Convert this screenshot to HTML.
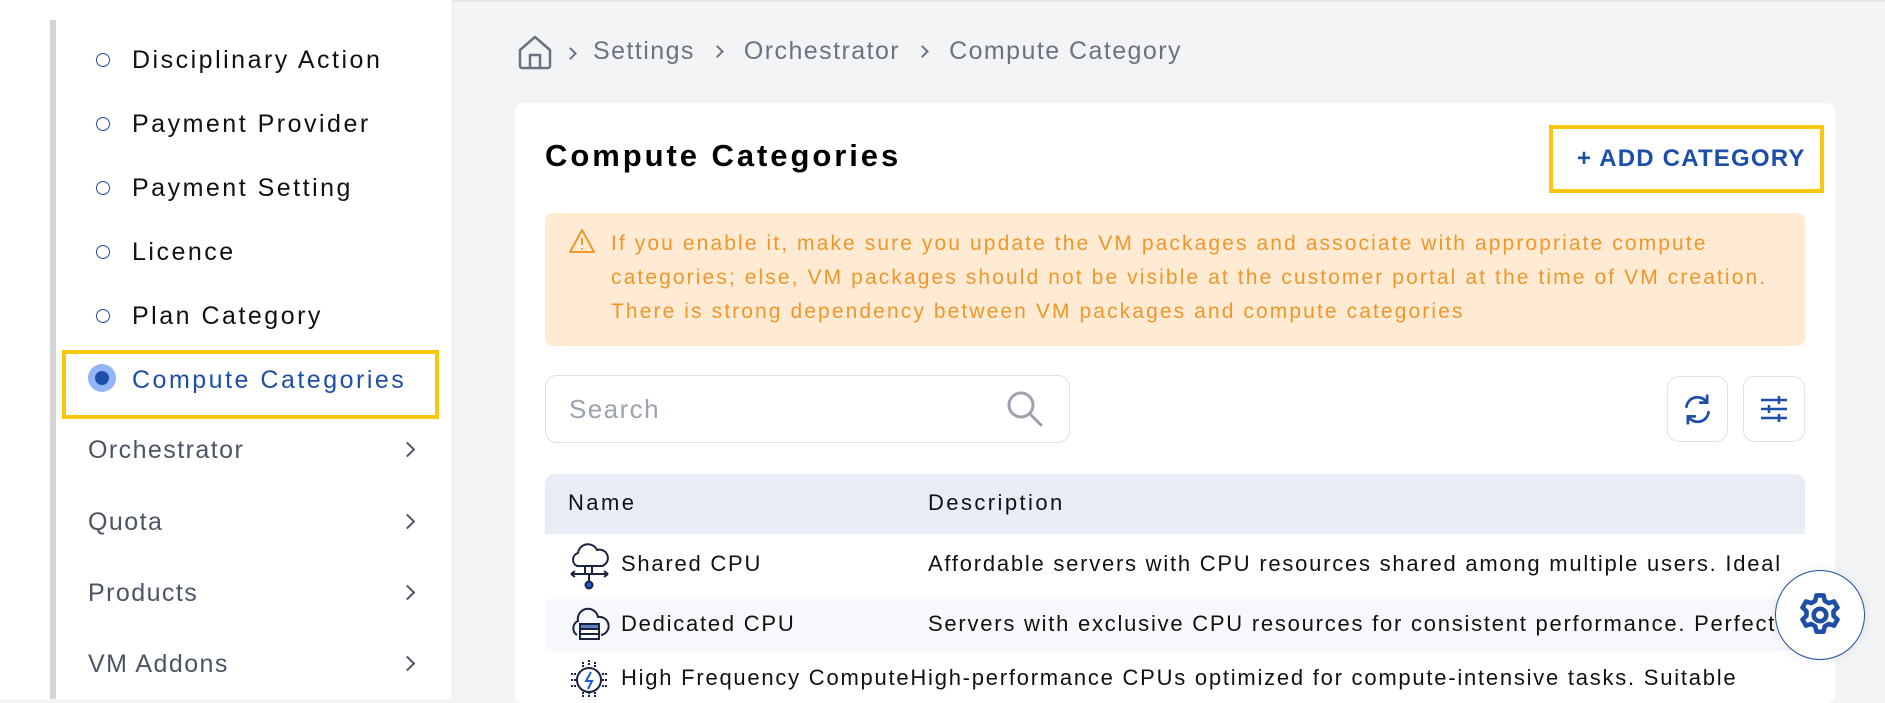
<!DOCTYPE html>
<html><head><meta charset="utf-8"><style>
*{margin:0;padding:0;box-sizing:border-box}
body{width:1885px;height:699px;overflow:hidden;background:#f3f4f6;font-family:"Liberation Sans",sans-serif;position:relative;letter-spacing:0.09em}
.a{position:absolute;white-space:nowrap}
#side{position:absolute;left:0;top:0;width:453px;height:699px;background:#fff;border-right:1px solid #e5e7eb}
.bar{position:absolute;left:50px;top:20px;width:6px;height:679px;background:#d4d4d4}
.si{position:absolute;left:132px;font-size:25px;color:#111;line-height:30px;letter-spacing:0.1em}
.dot{position:absolute;left:96px;width:14px;height:14px;border:1.5px solid #1e4fa8;border-radius:50%}
.mi{position:absolute;left:88px;font-size:25px;color:#4b5563;line-height:30px}
.chev{position:absolute;left:402px;width:11px;height:11px;border-right:2.5px solid #4b5563;border-top:2.5px solid #4b5563;transform:rotate(45deg)}
.row{position:absolute;left:545px;width:1259px;font-size:22px;color:#111}
.bcw{position:absolute;left:593px;top:37px;font-size:25px;color:#6b7280;white-space:nowrap;display:flex;align-items:center}
.sep{display:inline-block;width:9px;height:9px;border-right:2px solid #6b7280;border-top:2px solid #6b7280;transform:rotate(45deg);margin:0 22px 0 18px}
.rt{letter-spacing:0.11em}
</style></head><body>
<div id="side">
<div class="bar"></div>
<div class="dot" style="top:53px"></div><div class="si" style="top:45px">Disciplinary Action</div>
<div class="dot" style="top:117px"></div><div class="si" style="top:109px">Payment Provider</div>
<div class="dot" style="top:181px"></div><div class="si" style="top:173px">Payment Setting</div>
<div class="dot" style="top:245px"></div><div class="si" style="top:237px">Licence</div>
<div class="dot" style="top:309px"></div><div class="si" style="top:301px">Plan Category</div>
<div style="position:absolute;left:62px;top:350px;width:377px;height:69px;border:4px solid #f9c80e"></div>
<div style="position:absolute;left:88px;top:364px;width:28px;height:28px;border-radius:50%;background:#93b4f5"></div>
<div style="position:absolute;left:95px;top:371px;width:14px;height:14px;border-radius:50%;background:#1e4fa8"></div>
<div class="si" style="top:365px;color:#1e4fa8">Compute Categories</div>
<div class="mi" style="top:435px">Orchestrator</div><div class="chev" style="top:444px"></div>
<div class="mi" style="top:507px">Quota</div><div class="chev" style="top:516px"></div>
<div class="mi" style="top:578px">Products</div><div class="chev" style="top:587px"></div>
<div class="mi" style="top:649px">VM Addons</div><div class="chev" style="top:658px"></div>
</div>
<div style="position:absolute;left:453px;top:0;width:1432px;height:2px;background:#e5e7eb"></div>
<svg class="a" style="left:517px;top:34px" width="36" height="36" viewBox="0 0 36 36" fill="none" stroke="#6b7280" stroke-width="2.5" stroke-linejoin="round"><path d="M3 16L18 3l15 13v16a2 2 0 0 1-2 2H5a2 2 0 0 1-2-2z"/><path d="M13 34V21h10v13"/></svg>
<div class="a" style="left:566px;top:49px;width:9px;height:9px;border-right:2px solid #6b7280;border-top:2px solid #6b7280;transform:rotate(45deg)"></div>
<div class="bcw"><span>Settings</span><span class="sep"></span><span>Orchestrator</span><span class="sep"></span><span>Compute Category</span></div>
<div style="position:absolute;left:515px;top:103px;width:1320px;height:600px;background:#fff;border-radius:8px"></div>
<div class="a" style="left:545px;top:138px;font-size:31px;font-weight:bold;color:#000;letter-spacing:0.095em">Compute Categories</div>
<div style="position:absolute;left:1549px;top:125px;width:275px;height:68px;border:4px solid #f9c80e"></div>
<div class="a" style="left:1577px;top:145px;font-size:24px;font-weight:bold;color:#1e4fa8;letter-spacing:0.05em">+ ADD CATEGORY</div>
<div style="position:absolute;left:545px;top:213px;width:1260px;height:133px;background:#ffebd3;border-radius:8px"></div>
<svg class="a" style="left:568px;top:228px" width="28" height="26" viewBox="0 0 28 26" fill="none" stroke="#f0962a" stroke-width="2"><path d="M14 2L26 24H2z" stroke-linejoin="round"/><path d="M14 10v7M14 20v1.5"/></svg>
<div class="a" style="left:611px;top:227px;font-size:21px;line-height:34px;color:#f0962a;letter-spacing:0.1em">If you enable it, make sure you update the VM packages and associate with appropriate compute<br>categories; else, VM packages should not be visible at the customer portal at the time of VM creation.<br>There is strong dependency between VM packages and compute categories</div>
<div style="position:absolute;left:545px;top:375px;width:525px;height:68px;border:1.5px solid #e0e0e0;border-radius:12px"></div>
<div class="a" style="left:569px;top:394px;font-size:26px;color:#9ca3af">Search</div>
<svg class="a" style="left:1005px;top:389px" width="40" height="40" viewBox="0 0 40 40" fill="none" stroke="#9ca3af" stroke-width="3"><circle cx="16" cy="16" r="12"/><path d="M25 25l11 11" stroke-linecap="round"/></svg>
<div style="position:absolute;left:1667px;top:376px;width:61px;height:66px;border:1.5px solid #e0e0e0;border-radius:12px"></div>
<svg class="a" style="left:1681px;top:393px" width="33" height="33" viewBox="0 0 24 24" fill="none" stroke="#1e4fa8" stroke-width="2" stroke-linecap="round"><path d="M4 10a8 8 0 0 1 14.5-3.5M20 14a8 8 0 0 1-14.5 3.5"/><path d="M19 2v5h-5M5 22v-5h5"/></svg>
<div style="position:absolute;left:1743px;top:376px;width:62px;height:66px;border:1.5px solid #e0e0e0;border-radius:12px"></div>
<svg class="a" style="left:1760px;top:395px" width="28" height="28" viewBox="0 0 28 28" fill="none" stroke="#1e4fa8" stroke-width="2.5"><path d="M1 5h26M1 14h26M1 23h26"/><path d="M19 1v8M9 10v8M19 19v8"/></svg>
<div style="position:absolute;left:545px;top:474px;width:1260px;height:60px;background:#e8ecf5;border-radius:10px 10px 0 0"></div>
<div class="a rt" style="left:568px;top:490px;font-size:22px;color:#111">Name</div>
<div class="a rt" style="left:928px;top:490px;font-size:22px;color:#111">Description</div>
<div class="row" style="top:534px;height:65px;background:#fff"></div>
<div class="row" style="top:599px;height:52px;background:#f7f8fb"></div>
<div class="row" style="top:651px;height:48px;background:#fff"></div>
<svg class="a" style="left:567px;top:541px" width="45" height="50" viewBox="0 0 45 50" fill="none" stroke="#1a2340" stroke-width="2"><path d="M10 25a7 7 0 0 1 1-13 10 10 0 0 1 19-3 8 8 0 0 1 5 16z"/><path d="M18 25v8M25 25v8M4 33h37M4 33l4-3M4 33l4 3M41 33l-4-3M41 33l-4 3M22 33v9"/><circle cx="22" cy="44" r="3.5" fill="#1e5bd6"/></svg>
<div class="rt" style="position:absolute;left:545px;top:534px;width:1259px;height:165px;overflow:hidden">
<div class="a" style="left:76px;top:17px;font-size:22px;color:#111">Shared CPU</div>
<div class="a" style="left:383px;top:17px;font-size:22px;color:#111">Affordable servers with CPU resources shared among multiple users. Ideal</div>
<div class="a" style="left:76px;top:77px;font-size:22px;color:#111">Dedicated CPU</div>
<div class="a" style="left:383px;top:77px;font-size:22px;color:#111">Servers with exclusive CPU resources for consistent performance. Perfect</div>
<div class="a" style="left:76px;top:131px;font-size:22px;color:#111">High Frequency ComputeHigh-performance CPUs optimized for compute-intensive tasks. Suitable</div>
</div>
<svg class="a" style="left:567px;top:607px" width="45" height="36" viewBox="0 0 45 36" fill="none" stroke="#1a2340" stroke-width="2"><path d="M10 28a8 8 0 0 1 1-14 10 10 0 0 1 20-4 9 9 0 0 1 3 18"/><rect x="13" y="17" width="19" height="5" fill="#5b7fc4"/><rect x="13" y="22" width="19" height="5" fill="#fff"/><rect x="13" y="27" width="19" height="5" fill="#fff"/></svg>
<svg class="a" style="left:567px;top:658px" width="45" height="41" viewBox="0 0 45 41" fill="none" stroke="#1a2340" stroke-width="2"><circle cx="22" cy="22" r="12"/><path d="M24 14l-5 9h6l-4 8" stroke="#1e5bd6"/><path d="M16 4v6M22 2v6M28 4v6M4 16h6M4 22h6M4 28h6M35 16h6M35 22h6M35 28h6M16 34v6M22 34v6M28 34v6" stroke-dasharray="2 1"/></svg>
<div style="position:absolute;left:1775px;top:570px;width:90px;height:90px;border-radius:50%;background:#fff;border:1.5px solid #1e4fa8;box-shadow:0 0 12px rgba(0,0,0,.08)"></div>
<svg class="a" style="left:1795px;top:590px" width="50" height="50" viewBox="0 0 24 24" fill="none" stroke="#1e4fa8" stroke-width="2.2" stroke-linejoin="round"><path d="M10.3 2.6h3.4l.6 2.6 1.9 1.1 2.5-.8 1.7 2.9-1.9 1.8v2.2l1.9 1.8-1.7 2.9-2.5-.8-1.9 1.1-.6 2.6h-3.4l-.6-2.6-1.9-1.1-2.5.8-1.7-2.9 1.9-1.8v-2.2L3.6 8.4l1.7-2.9 2.5.8 1.9-1.1z"/><circle cx="12" cy="12" r="3"/></svg>
</body></html>
